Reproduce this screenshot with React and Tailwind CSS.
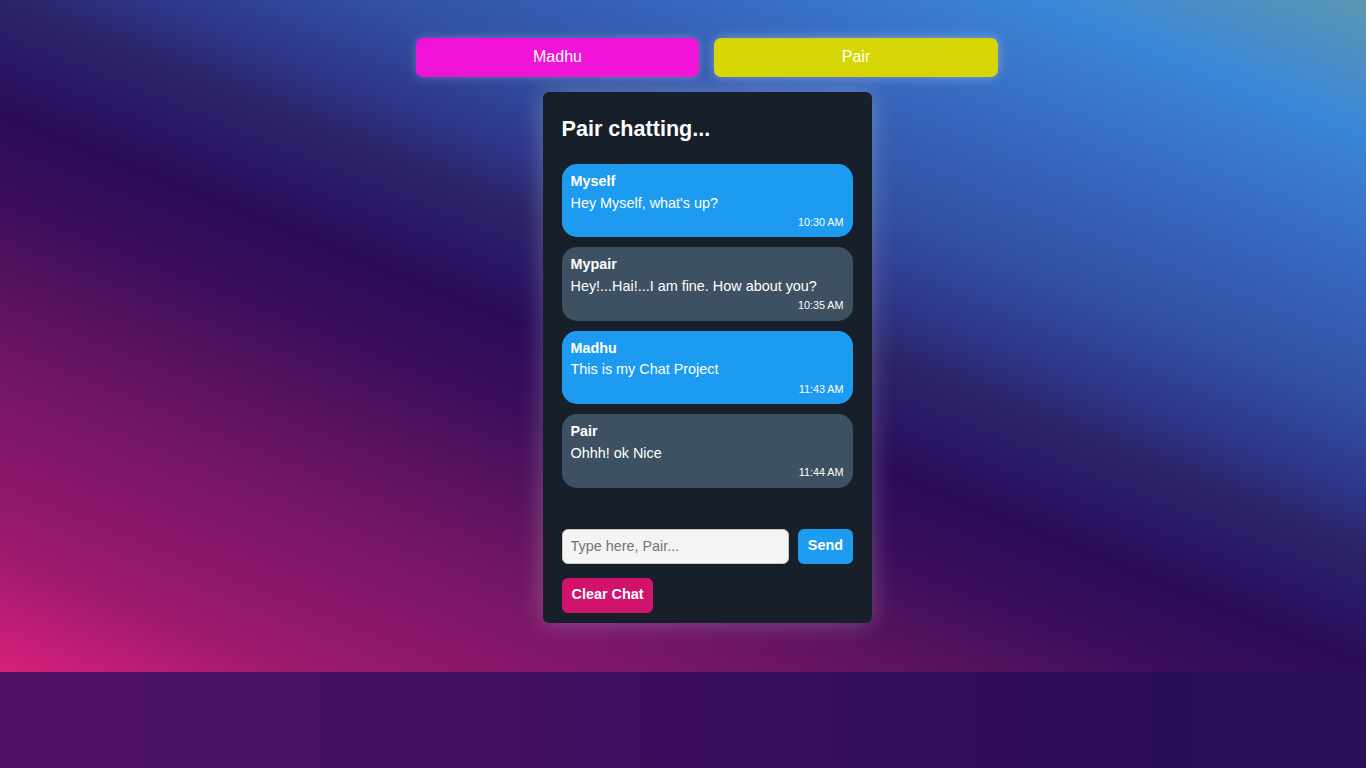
export default function App() {
  const messages = [
    { name: "Myself", text: "Hey Myself, what's up?", time: "10:30 AM", mine: true },
    { name: "Mypair", text: "Hey!...Hai!...I am fine. How about you?", time: "10:35 AM", mine: false },
    { name: "Madhu", text: "This is my Chat Project", time: "11:43 AM", mine: true },
    { name: "Pair", text: "Ohhh! ok Nice", time: "11:44 AM", mine: false },
  ];
  return (
    <div className="h-screen flex flex-col font-[family-name:Liberation_Sans,Arial,sans-serif] overflow-hidden">
      <div className="h-[672px] shrink-0 bg-[linear-gradient(22deg,#d8207a_0%,#9c1a6e_10%,#7a1668_22%,#5e145f_30%,#3a0e5a_39%,#2a0c5a_46%,#2a1a66_51%,#2c2468_55%,#2e3485_59%,#3250a2_67%,#3562b8_75%,#3a76ca_83%,#3a86d8_89%,#5090c0_96%,#5a98b0_100%)]">
        <div className="flex flex-col items-center pl-[48px] pt-[38px]">
          <div className="flex gap-[15px]">
            <button className="w-[283px] h-[38.5px] rounded-[7px] bg-[#f112d8] text-white text-[16px] shadow-[0_0_10px_rgba(255,255,255,0.25)]">
              Madhu
            </button>
            <button className="w-[284px] h-[38.5px] rounded-[7px] bg-[#d6d604] text-white text-[16px] shadow-[0_0_12px_rgba(255,255,255,0.35)]">
              Pair
            </button>
          </div>
          <div className="mt-[15.5px] w-[329px] bg-[#17202a] rounded-[6px] px-[19px] pt-[24px] pb-[10px] shadow-[0_0_25px_rgba(255,255,255,0.25)]">
            <h2 className="text-white font-bold text-[21.6px] leading-[25px]">Pair chatting...</h2>
            <div className="mt-[23px] flex flex-col gap-[10px]">
              {messages.map((m, i) => (
                <div
                  key={i}
                  className={
                    "rounded-[15px] px-[9px] py-[9px] text-white " +
                    (m.mine ? "bg-[#1d9bf0]" : "bg-[#3e5163]")
                  }
                >
                  <div className="font-bold text-[14.4px] leading-[16.5px]">{m.name}</div>
                  <div className="mt-[5px] text-[14.4px] leading-[16.5px]">{m.text}</div>
                  <div className="mt-[5px] text-right text-[10.8px] leading-[12.4px]">{m.time}</div>
                </div>
              ))}
            </div>
            <div className="mt-[41px] flex gap-[9.5px]">
              <input
                className="flex-1 min-w-0 h-[35px] rounded-[6px] bg-[#f4f4f4] border border-[#c8c8c8] px-[8px] text-[14.4px] text-black placeholder:text-[#757575] outline-none"
                placeholder="Type here, Pair..."
              />
              <button className="h-[35px] px-[9.5px] rounded-[6px] bg-[#1d9bf0] text-white font-bold text-[14.4px]">
                Send
              </button>
            </div>
            <button className="mt-[14px] h-[35px] px-[10px] rounded-[6px] bg-[#d1136b] text-white font-bold text-[14.4px]">
              Clear Chat
            </button>
          </div>
        </div>
      </div>
      <div className="flex-1 bg-[linear-gradient(90deg,#501262_0%,#441060_30%,#360e5c_60%,#2a0d58_85%,#2a0f5c_100%)]"></div>
    </div>
  );
}
